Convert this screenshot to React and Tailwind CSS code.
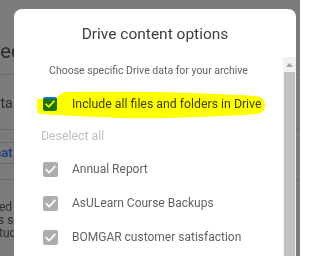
import React from "react";

function Check({ color = "white" }) {
  return (
    <svg viewBox="0 0 16 16" className="w-full h-full">
      <path d="M3.5 8.3 L6.6 11.2 L12.6 4.8" fill="none" stroke={color} strokeWidth="1.8" strokeLinecap="square" />
    </svg>
  );
}

function Row({ label }) {
  return (
    <div className="flex items-center h-[24px]">
      <div className="w-[15px] h-[15px] rounded-[2px] bg-[#adadad] shrink-0">
        <Check />
      </div>
      <span className="ml-[14px] text-[12px] text-[#5f6368] whitespace-nowrap">{label}</span>
    </div>
  );
}

export default function App() {
  return (
    <div className="relative w-[300px] h-[256px] overflow-hidden bg-[#7c7c7c] font-['Roboto',sans-serif]">
      {/* background page, dimmed */}
      <div className="flex flex-col w-full">
        <div className="h-[75px] flex items-end pb-[10px] border-b border-[#6c6c6c]">
          <span className="ml-[-27px] text-[20px] leading-[26px] text-[#2b2b2b] whitespace-nowrap">Selected</span>
        </div>
        <div className="h-[55px] flex items-start pt-[19px] border-b border-[#6c6c6c]">
          <span className="ml-[-15px] text-[14px] leading-[18px] text-[#2e2e2e] whitespace-nowrap">data types</span>
        </div>
        <div className="h-[50px] flex items-start pt-[12px] border-b border-[#6c6c6c]">
          <div className="ml-[-38px] h-[22px] px-[8px] flex items-center rounded-[4px] border border-[#6a6a6a]">
            <span className="text-[13px] text-[#173d86] font-medium whitespace-nowrap">Format</span>
          </div>
        </div>
        <div className="flex flex-col pt-[21px] text-[12px] leading-[13px] text-[#2e2e2e] whitespace-nowrap">
          <span className="ml-[-1px]">ed items</span>
          <span className="ml-[-2px]">s shared</span>
          <span className="ml-[-1px]">tucture</span>
        </div>
      </div>

      {/* dialog */}
      <div className="absolute left-[14px] top-[9px] w-[282px] h-[270px] bg-white rounded-[8px] flex flex-col overflow-hidden">
        <div className="pt-[13px] h-[48px] text-center text-[15.5px] leading-[24px] text-[#3c4043]">
          Drive content options
        </div>
        <div className="flex flex-1">
          <div className="flex-1 flex flex-col">
            <div className="pt-[6px] text-center text-[10.5px] leading-[16px] text-[#5f6368] whitespace-nowrap">
              Choose specific Drive data for your archive
            </div>
            <div className="pl-[29px] flex flex-col">
              <div className="mt-[13px] flex items-center h-[24px]">
                <div className="w-[14px] h-[14px] rounded-[2px] bg-[#1a73e8] shrink-0">
                  <Check />
                </div>
                <span className="ml-[15px] text-[12.3px] text-[#3c4043] whitespace-nowrap">
                  Include all files and folders in Drive
                </span>
              </div>
              <div className="mt-[10px] ml-[-2px] h-[20px] flex items-center text-[12.3px] text-[#bdc1c6]">
                Deselect all
              </div>
              <div className="mt-[11px] flex flex-col gap-[10px]">
                <Row label="Annual Report" />
                <Row label="AsULearn Course Backups" />
                <Row label="BOMGAR customer satisfaction" />
              </div>
            </div>
          </div>
          <div className="w-[13px] bg-[#f1f1f1] flex flex-col">
            <div className="h-[15px] flex items-center justify-center">
              <svg width="7" height="4" viewBox="0 0 7 4">
                <path d="M0 4 L3.5 0 L7 4 Z" fill="#a3a3a3" />
              </svg>
            </div>
            <div className="flex-1 mx-[1px] bg-[#c1c1c1]" />
          </div>
        </div>
      </div>

      {/* highlighter stroke */}
      <svg className="absolute left-0 top-0 w-[300px] h-[256px] pointer-events-none mix-blend-multiply" viewBox="0 0 300 256">
        <path
          d="M37,99 L57,98.5 Q59,93 66,92 C130,91 200,92 256,96 Q265,97 265,105 Q265,113 257,114 C210,117 160,119 120,118 C90,117 60,115 40,114 Q37,113 37,106 Z"
          fill="#ffff00"
        />
      </svg>
    </div>
  );
}
